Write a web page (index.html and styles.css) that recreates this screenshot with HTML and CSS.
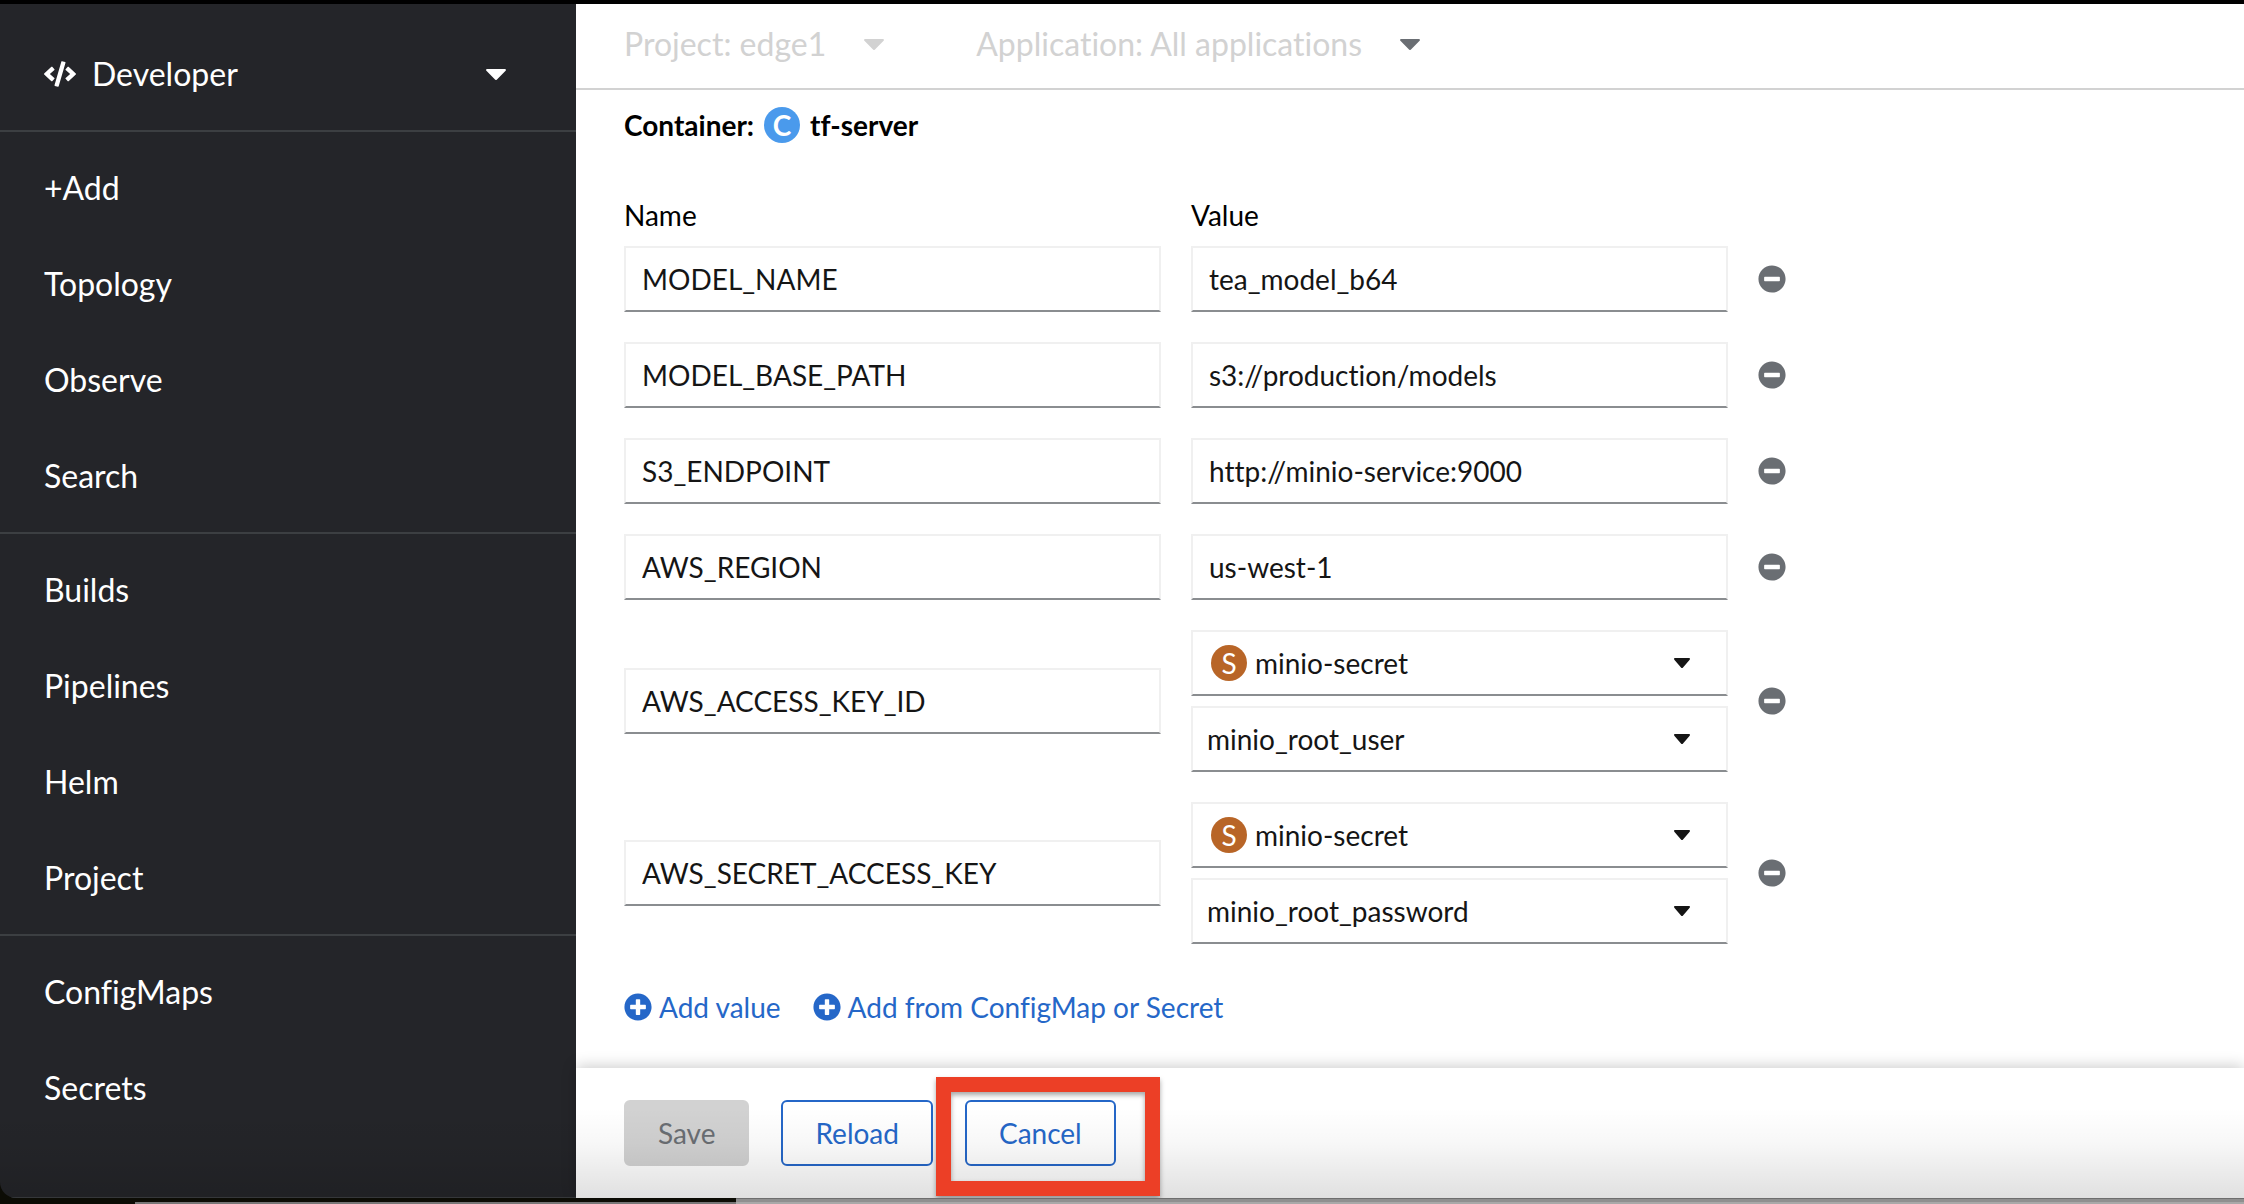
FILE: index.html
```html
<!DOCTYPE html>
<html lang="en">
<head>
<meta charset="utf-8">
<meta name="viewport" content="width=device-width, initial-scale=1">
<title>Environment - tf-server</title>
<link rel="stylesheet" href="styles.css">
</head>
<body>
<svg class="defs" aria-hidden="true">
  <symbol id="caret" viewBox="0 0 20 11" preserveAspectRatio="none"><path d="M1.2 0h17.6c1 0 1.500 1.100.8 1.800L11 10.600a1.500 1.500 0 0 1-2 0L.4 1.800C-.3 1.100.2 0 1.200 0z"/></symbol>
  <symbol id="minus" viewBox="0 0 512 512"><path d="M256 8C119 8 8 119 8 256s111 248 248 248 248-111 248-248S393 8 256 8zM124 296c-6.600 0-12-5.400-12-12v-56c0-6.600 5.400-12 12-12h264c6.600 0 12 5.400 12 12v56c0 6.600-5.400 12-12 12H124z"/></symbol>
  <symbol id="plus" viewBox="0 0 512 512"><path d="M256 8C119 8 8 119 8 256s111 248 248 248 248-111 248-248S393 8 256 8zm144 276c0 6.600-5.400 12-12 12h-92v92c0 6.600-5.400 12-12 12h-56c-6.600 0-12-5.400-12-12v-92h-92c-6.600 0-12-5.400-12-12v-56c0-6.600 5.400-12 12-12h92v-92c0-6.600 5.400-12 12-12h56c6.600 0 12 5.400 12 12v92h92c6.600 0 12 5.400 12 12v56z"/></symbol>
</svg>

<div class="app">
  <aside class="sidebar">
    <button class="perspective" type="button">
      <svg class="code-icon" viewBox="0 0 640 512" aria-hidden="true"><path d="M278.900 511.500l-61-17.700c-6.400-1.800-10-8.500-8.200-14.900L346.200 8.700c1.800-6.400 8.500-10 14.900-8.200l61 17.700c6.400 1.800 10 8.500 8.200 14.900L293.800 503.300c-1.900 6.400-8.500 10.100-14.900 8.200zm-114-112.200l43.500-46.400c4.600-4.900 4.300-12.700-.8-17.200L117 256l90.600-79.700c5.100-4.500 5.500-12.300.8-17.200l-43.500-46.400c-4.500-4.800-12.100-5.100-17-.5L3.800 247.200c-5.100 4.700-5.100 12.800 0 17.500l144.100 135.100c4.900 4.600 12.500 4.400 17-.5zm327.200.6l144.100-135.100c5.100-4.700 5.100-12.800 0-17.500L492.100 112.100c-4.800-4.500-12.400-4.300-17 .5L431.600 159c-4.600 4.900-4.300 12.700.8 17.200L523 256l-90.600 79.700c-5.100 4.500-5.500 12.300-.8 17.200l43.500 46.400c4.500 4.900 12.100 5.100 17 .6z"/></svg>
      <span>Developer</span>
      <svg class="caret caret-end" aria-hidden="true"><use href="#caret"/></svg>
    </button>
    <nav>
      <ul class="nav-section">
        <li><a href="#add">+Add</a></li>
        <li><a href="#topology">Topology</a></li>
        <li><a href="#observe">Observe</a></li>
        <li><a href="#search">Search</a></li>
      </ul>
      <ul class="nav-section">
        <li><a href="#builds">Builds</a></li>
        <li><a href="#pipelines">Pipelines</a></li>
        <li><a href="#helm">Helm</a></li>
        <li><a href="#project">Project</a></li>
      </ul>
      <ul class="nav-section">
        <li><a href="#configmaps">ConfigMaps</a></li>
        <li><a href="#secrets">Secrets</a></li>
      </ul>
    </nav>
  </aside>

  <main class="main">
    <header class="context-bar">
      <button type="button" disabled>Project: edge1 <svg class="caret" aria-hidden="true"><use href="#caret"/></svg></button>
      <button type="button" disabled>Application: All applications <svg class="caret caret-dark" aria-hidden="true"><use href="#caret"/></svg></button>
    </header>

    <form class="environment">
      <h1 class="container-title">Container: <span class="badge badge-container">C</span> tf-server</h1>

      <div class="pairs">
        <div class="pair pair-head">
          <span id="name-label">Name</span>
          <span id="value-label">Value</span>
        </div>
        <div class="pair">
          <input class="field" type="text" aria-labelledby="name-label" value="MODEL_NAME">
          <input class="field" type="text" aria-labelledby="value-label" value="tea_model_b64">
          <button class="remove" type="button" aria-label="Remove MODEL_NAME"><svg><use href="#minus"/></svg></button>
        </div>
        <div class="pair">
          <input class="field" type="text" aria-labelledby="name-label" value="MODEL_BASE_PATH">
          <input class="field" type="text" aria-labelledby="value-label" value="s3://production/models">
          <button class="remove" type="button" aria-label="Remove MODEL_BASE_PATH"><svg><use href="#minus"/></svg></button>
        </div>
        <div class="pair">
          <input class="field" type="text" aria-labelledby="name-label" value="S3_ENDPOINT">
          <input class="field" type="text" aria-labelledby="value-label" value="http://minio-service:9000">
          <button class="remove" type="button" aria-label="Remove S3_ENDPOINT"><svg><use href="#minus"/></svg></button>
        </div>
        <div class="pair">
          <input class="field" type="text" aria-labelledby="name-label" value="AWS_REGION">
          <input class="field" type="text" aria-labelledby="value-label" value="us-west-1">
          <button class="remove" type="button" aria-label="Remove AWS_REGION"><svg><use href="#minus"/></svg></button>
        </div>
        <div class="pair">
          <input class="field" type="text" aria-labelledby="name-label" value="AWS_ACCESS_KEY_ID">
          <div class="sources">
            <div class="field picker">
              <span class="badge badge-secret">S</span>
              <select aria-label="Secret"><option>minio-secret</option></select>
              <svg class="caret" aria-hidden="true"><use href="#caret"/></svg>
            </div>
            <div class="field picker">
              <select aria-label="Secret key"><option>minio_root_user</option></select>
              <svg class="caret" aria-hidden="true"><use href="#caret"/></svg>
            </div>
          </div>
          <button class="remove" type="button" aria-label="Remove AWS_ACCESS_KEY_ID"><svg><use href="#minus"/></svg></button>
        </div>
        <div class="pair">
          <input class="field" type="text" aria-labelledby="name-label" value="AWS_SECRET_ACCESS_KEY">
          <div class="sources">
            <div class="field picker">
              <span class="badge badge-secret">S</span>
              <select aria-label="Secret"><option>minio-secret</option></select>
              <svg class="caret" aria-hidden="true"><use href="#caret"/></svg>
            </div>
            <div class="field picker">
              <select aria-label="Secret key"><option>minio_root_password</option></select>
              <svg class="caret" aria-hidden="true"><use href="#caret"/></svg>
            </div>
          </div>
          <button class="remove" type="button" aria-label="Remove AWS_SECRET_ACCESS_KEY"><svg><use href="#minus"/></svg></button>
        </div>
      </div>

      <div class="add-links">
        <button type="button"><svg aria-hidden="true"><use href="#plus"/></svg>Add value</button>
        <button type="button"><svg aria-hidden="true"><use href="#plus"/></svg>Add from ConfigMap or Secret</button>
      </div>
    </form>

    <footer class="actions">
      <button class="btn btn-disabled" type="button" disabled>Save</button>
      <button class="btn" type="button">Reload</button>
      <div class="marked">
        <button class="btn" type="button">Cancel</button>
        <span class="marker" aria-hidden="true"></span>
      </div>
    </footer>
  </main>
</div>
<div class="desktop-edge" aria-hidden="true"></div>
</body>
</html>
```
FILE: styles.css
```css
* { box-sizing: border-box; }

body {
  margin: 0;
  min-height: 100vh;
  display: flex;
  flex-direction: column;
  border-top: 4px solid #000;
  background: #0c0c05;
  color: #000;
  font: 28px/42px Lato, "Open Sans", sans-serif;
  font-variant-ligatures: none;
}

button, input, select { font: inherit; font-variant-ligatures: none; color: inherit; }
button { margin: 0; padding: 0; border: 0; background: none; }
svg { display: block; flex: none; fill: currentColor; }
.defs { position: absolute; width: 0; height: 0; }

.app {
  position: relative;
  flex: 1;
  display: flex;
  border-bottom-left-radius: 16px;
  overflow: hidden;
}
/* shade along the bottom of the window */
.app::after {
  content: "";
  position: absolute;
  inset: auto 0 0;
  height: 90px;
  background: linear-gradient(rgba(0, 0, 0, 0), rgba(0, 0, 0, .03) 40%, rgba(0, 0, 0, .12));
  pointer-events: none;
}

.caret { width: 20px; height: 11px; }

/* Sidebar */
.sidebar {
  flex: none;
  width: 576px;
  background: #242529;
  color: #fff;
  font-size: 32px;
  line-height: 48px;
  border-bottom: 1px solid #3c3f42;
}
.perspective {
  display: flex;
  align-items: center;
  gap: 16px;
  width: 100%;
  height: 126px;
  padding: 14px 70px 0 44px;
}
.code-icon { width: 32px; height: 26px; }
.caret-end { margin-left: auto; }
.nav-section {
  margin: 0;
  padding: 8px 0;
  border-top: 2px solid #3c3f42;
  list-style: none;
}
.nav-section a {
  display: block;
  padding: 24px 44px;
  color: inherit;
  text-decoration: none;
}

/* Main column */
.main {
  flex: 1;
  min-width: 0;
  display: flex;
  flex-direction: column;
  background: #fff;
}
.context-bar {
  display: flex;
  align-items: center;
  gap: 92px;
  height: 86px;
  padding: 0 48px 4px;
  border-bottom: 2px solid #d2d2d2;
  font-size: 32px;
  color: #d2d2d2;
}
.context-bar button {
  display: flex;
  align-items: center;
  gap: 38px;
}
.caret-dark { color: #6a6e73; }

.environment { padding: 14px 48px 40px; }
.container-title {
  display: flex;
  align-items: center;
  gap: 10px;
  margin: 0;
  font-size: 28px;
  font-weight: 700;
}
.badge {
  flex: none;
  width: 36px;
  height: 36px;
  border-radius: 50%;
  color: #fff;
  text-align: center;
  line-height: 36px;
}
.badge-container { background: #4a9aec; }
.badge-secret { background: #b86527; }

.pairs {
  display: grid;
  gap: 30px;
  margin-top: 48px;
}
.pair {
  display: grid;
  grid-template-columns: minmax(0, 537px) minmax(0, 537px) 28px;
  column-gap: 30px;
  align-items: center;
}
.pair-head { margin-bottom: -20px; }
.field {
  width: 100%;
  height: 66px;
  padding: 0 16px;
  border: 2px solid #f0f0f0;
  border-bottom-color: #8a8d90;
  border-radius: 0;
  background: #fff;
  color: #151515;
}
.sources { display: grid; gap: 10px; }
.picker {
  display: flex;
  align-items: center;
  gap: 4px;
  padding: 0 36px 0 10px;
}
.picker .badge { margin-left: 8px; }
.picker select {
  flex: 1;
  min-width: 0;
  height: 100%;
  padding: 0 4px;
  border: 0;
  background: none;
  appearance: none;
}
.picker .caret { width: 16px; height: 10px; }
.remove { color: #6a6e73; }
.remove svg { width: 28px; height: 28px; }

.add-links {
  display: flex;
  flex-wrap: wrap;
  gap: 32px;
  margin-top: 42px;
  color: #2567c8;
}
.add-links button {
  display: flex;
  align-items: center;
  gap: 7px;
}
.add-links svg { width: 28px; height: 28px; }

/* Footer actions */
.actions {
  display: flex;
  gap: 32px;
  margin-top: auto;
  padding: 32px 48px;
  box-shadow: 0 -2px 14px rgba(0, 0, 0, .2);
}
.btn {
  height: 66px;
  padding: 0 32px;
  border: 2px solid #2567c8;
  border-radius: 6px;
  color: #2567c8;
}
.btn-disabled {
  border-color: #d2d2d2;
  background: #d2d2d2;
  color: #6a6e73;
}
.marked { position: relative; }
.marker {
  position: absolute;
  z-index: 1;
  inset: -23px -44px -30px -29px;
  border: 15px solid #ec3f26;
  box-shadow: 0 3px 5px rgba(0, 0, 0, .35), inset 0 3px 5px rgba(0, 0, 0, .35);
  pointer-events: none;
}

/* Sliver of the desktop below the window */
.desktop-edge {
  height: 6px;
  background:
    linear-gradient(#6e6e6e 1px, #8f8f8f 1px 4px, #a8a8a8 4px) 736px 0 / 100% 100% no-repeat,
    linear-gradient(#777, #777) 135px 4px / 100% 2px no-repeat,
    #0c0c05;
}
```
